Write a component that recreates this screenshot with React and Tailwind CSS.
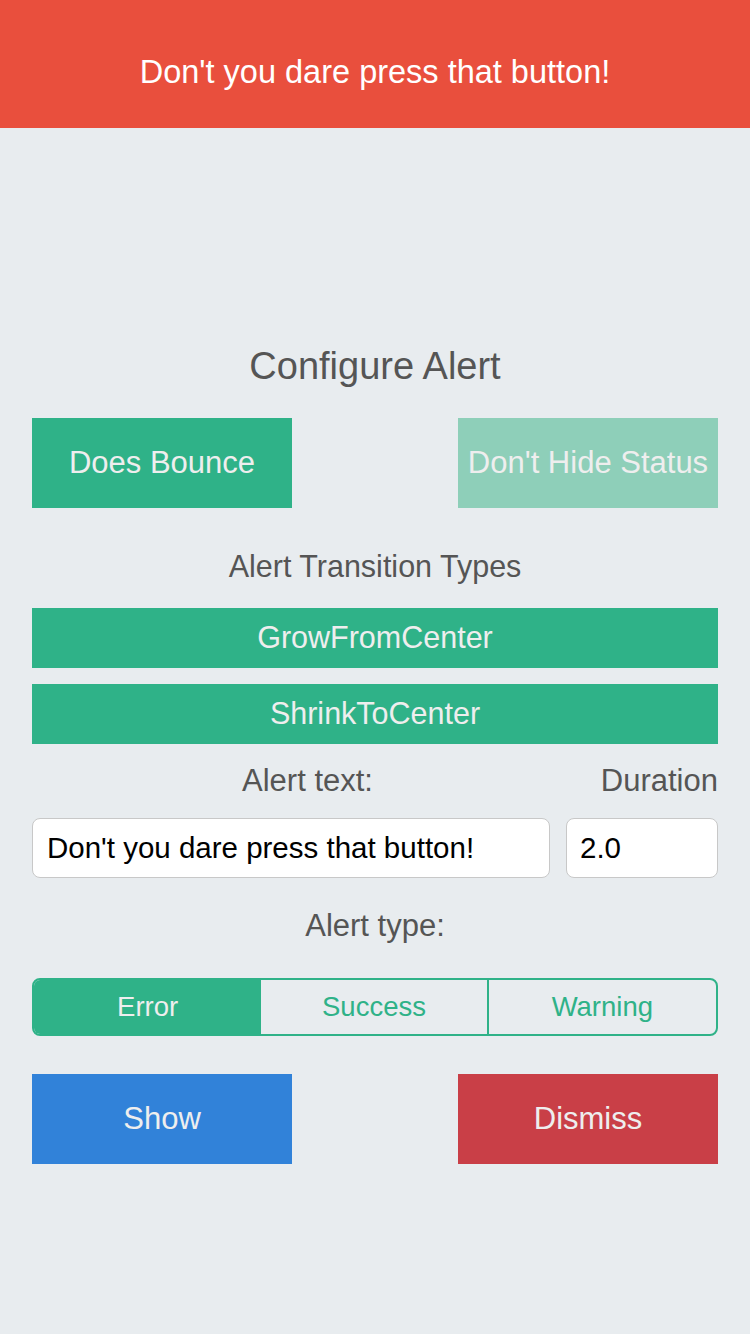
export default function App() {
  const font = { fontFamily: '"Liberation Sans", Arial, sans-serif' };
  return (
    <div style={font} className="min-h-[1334px] w-[750px] bg-[#e8ecef]">
      <div className="flex h-[128px] items-center justify-center bg-[#e94f3d] pt-[16px] text-[32.5px] text-white">
        Don't you dare press that button!
      </div>

      <div className="px-[32px]">
        <h1 className="mt-[216px] h-[44px] text-center text-[38px] leading-[44px] text-[#555]">Configure Alert</h1>

        <div className="mt-[30px] flex justify-between">
          <button className="h-[90px] w-[260px] bg-[#2fb288] text-[31px] text-[#eee]">Does Bounce</button>
          <button className="h-[90px] w-[260px] whitespace-nowrap bg-[#8ecfb9] text-[31px] text-[#eee]">Don't Hide Status</button>
        </div>

        <p className="mt-[41px] text-center text-[30.5px] leading-[34px] text-[#555]">Alert Transition Types</p>

        <div className="mt-[25px] flex flex-col gap-[16px]">
          <button className="h-[60px] w-full bg-[#2fb288] text-[30.5px] text-[#eee]">GrowFromCenter</button>
          <button className="h-[60px] w-full bg-[#2fb288] text-[30.5px] text-[#eee]">ShrinkToCenter</button>
        </div>

        <div className="mt-[20px] flex text-[31px] leading-[34px] text-[#555]">
          <span className="flex-1 text-center">Alert text:</span>
          <span className="w-[135px] text-right">Duration</span>
        </div>

        <div className="mt-[20px] flex gap-[16px]">
          <div className="flex h-[60px] flex-1 items-center rounded-[8px] border border-[#c8c8c8] bg-white px-[14px] text-[29.5px] text-black">
            Don't you dare press that button!
          </div>
          <div className="flex h-[60px] w-[152px] items-center rounded-[8px] border border-[#c8c8c8] bg-white px-[13px] text-[29.5px] text-black">
            2.0
          </div>
        </div>

        <p className="mt-[31px] text-center text-[31px] leading-[34px] text-[#555]">Alert type:</p>

        <div className="mt-[35px] grid h-[58px] grid-cols-3 overflow-hidden rounded-[8px] border-2 border-[#2fb288] text-[27.5px]">
          <div className="flex items-center justify-center bg-[#2fb288] text-[#eee]">Error</div>
          <div className="flex items-center justify-center border-r-2 border-[#2fb288] text-[#2fb288]">Success</div>
          <div className="flex items-center justify-center text-[#2fb288]">Warning</div>
        </div>

        <div className="mt-[38px] flex justify-between">
          <button className="h-[90px] w-[260px] bg-[#3182d9] text-[31px] text-[#eee]">Show</button>
          <button className="h-[90px] w-[260px] bg-[#c93f47] text-[31px] text-[#eee]">Dismiss</button>
        </div>
      </div>
    </div>
  );
}
